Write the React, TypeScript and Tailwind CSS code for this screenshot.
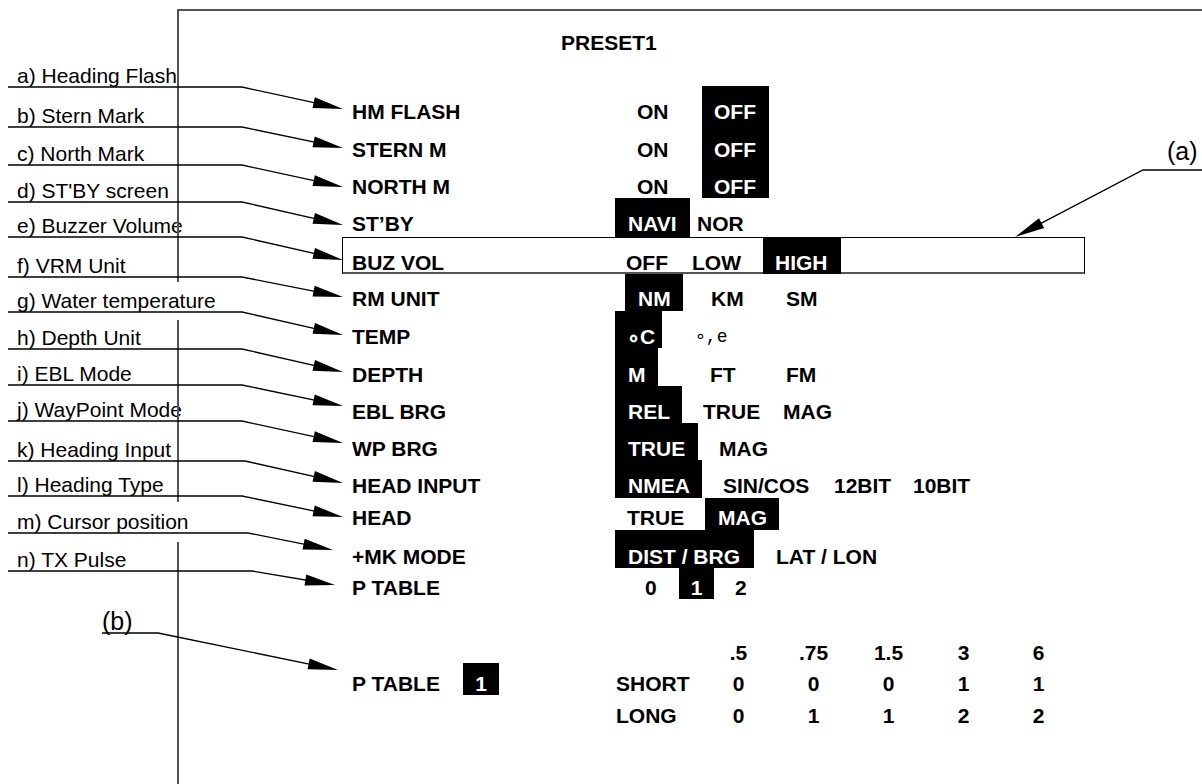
import React from "react";

type Leader = [number, number, number, number];

// [lineY, elbowX, tipX, tipY]
const leaders: Leader[] = [
  [87, 242, 343, 109],
  [127, 242, 343, 148],
  [165, 242, 343, 187],
  [202, 242, 343, 225],
  [237, 242, 343, 260],
  [277, 242, 343, 297],
  [312, 242, 343, 335],
  [349, 242, 343, 372],
  [385, 242, 343, 406],
  [421, 242, 343, 443],
  [461, 245, 343, 483],
  [496, 242, 343, 517],
  [533, 248, 333, 550],
  [571, 252, 335, 585],
];

function arrow(fx: number, fy: number, tx: number, ty: number, len = 30, hw = 5.5) {
  const dx = tx - fx;
  const dy = ty - fy;
  const d = Math.hypot(dx, dy);
  const ux = dx / d;
  const uy = dy / d;
  const bx = tx - ux * len;
  const by = ty - uy * len;
  const px = -uy * hw;
  const py = ux * hw;
  return {
    head: `${tx},${ty} ${bx + px},${by + py} ${bx - px},${by - py}`,
    end: `${tx - ux * 12},${ty - uy * 12}`,
  };
}

function Leaders() {
  const a = arrow(1143, 170, 1015, 237);
  const b = arrow(158, 633, 338, 670);
  return (
    <svg
      className="absolute left-0 top-0 z-10 pointer-events-none"
      width={1202}
      height={784}
      viewBox="0 0 1202 784"
    >
      {leaders.map(([y, ex, tx, ty], i) => {
        const r = arrow(ex, y, tx, ty);
        return (
          <g key={i}>
            <polyline
              points={`8,${y} ${ex},${y} ${r.end}`}
              fill="none"
              stroke="#000"
              strokeWidth={1.3}
            />
            <polygon points={r.head} fill="#000" />
          </g>
        );
      })}
      <polyline points={`102,633 158,633 ${b.end}`} fill="none" stroke="#000" strokeWidth={1.3} />
      <polygon points={b.head} fill="#000" />
      <polyline points={`1202,170 1143,170 ${a.end}`} fill="none" stroke="#000" strokeWidth={1.3} />
      <polygon points={a.head} fill="#000" />
    </svg>
  );
}

const Row = ({
  h,
  pt,
  label,
  children,
}: {
  h: string;
  pt: string;
  label: string;
  children: React.ReactNode;
}) => (
  <div className={`flex ${h}`}>
    <div className={`w-[263px] shrink-0 ${pt}`}>{label}</div>
    {children}
  </div>
);

export default function App() {
  return (
    <div className="relative flex w-[1202px] h-[784px] overflow-hidden bg-white pt-[9px] text-black font-['Liberation_Sans',Arial,sans-serif]">
      {/* left caption column */}
      <div className="w-[177px] shrink-0 text-[21px] leading-[24px] whitespace-nowrap">
        <div className="mt-[55px] h-[40px] pl-[17px]">a) Heading Flash</div>
        <div className="h-[38px] pl-[17px]">b) Stern Mark</div>
        <div className="h-[37px] pl-[17px]">c) North Mark</div>
        <div className="h-[35px] pl-[17px]">d) ST'BY screen</div>
        <div className="h-[40px] pl-[17px]">e) Buzzer Volume</div>
        <div className="h-[35px] pl-[17px]">f) VRM Unit</div>
        <div className="relative z-[1] -mt-[7px] mb-[6px] h-[38px] w-[200px] bg-white pt-[7px] pl-[17px]">
          g) Water temperature
        </div>
        <div className="h-[36px] pl-[17px]">h) Depth Unit</div>
        <div className="h-[36px] pl-[17px]">i) EBL Mode</div>
        <div className="h-[40px] pl-[17px]">j) WayPoint Mode</div>
        <div className="h-[35px] pl-[17px]">k) Heading Input</div>
        <div className="h-[37px] pl-[17px]">l) Heading Type</div>
        <div className="relative z-[1] -mt-[8px] mb-[6px] h-[40px] w-[200px] bg-white pt-[8px] pl-[17px]">
          m) Cursor position
        </div>
        <div className="h-[59px] pl-[17px]">n) TX Pulse</div>
        <div className="pl-[102px] text-[25px] leading-[28px]">(b)</div>
      </div>

      {/* framed preset panel */}
      <div className="flex-1 border-t-2 border-l-2 border-[#555] text-[21px] font-bold leading-[21px] whitespace-nowrap">
        <div className="mt-[21px] pl-[382px]">PRESET1</div>

        <div className="ml-[173px] mt-[33px] flex flex-col">
          <Row h="h-[37px]" pt="pt-[15px]" label="HM FLASH">
            <div className="ml-[22px] w-[65px] pt-[15px]">ON</div>
            <div className="w-[67px] bg-black pl-[12px] pt-[15px] text-white">OFF</div>
          </Row>
          <Row h="h-[38px]" pt="pt-[16px]" label="STERN M">
            <div className="ml-[22px] w-[65px] pt-[16px]">ON</div>
            <div className="w-[67px] bg-black pl-[12px] pt-[16px] text-white">OFF</div>
          </Row>
          <Row h="h-[37px]" pt="pt-[15px]" label="NORTH M">
            <div className="ml-[22px] w-[65px] pt-[15px]">ON</div>
            <div className="w-[67px] bg-black pl-[12px] pt-[15px] text-white">OFF</div>
          </Row>
          <Row h="h-[39px]" pt="pt-[15px]" label="ST’BY">
            <div className="w-[75px] bg-black pl-[13px] pt-[15px] text-white">NAVI</div>
            <div className="ml-[7px] pt-[15px]">NOR</div>
          </Row>

          {/* (a) highlighted row */}
          <div className="-ml-[10px] flex h-[37px] w-[743px] border-t border-l border-r border-black border-b-2 border-b-[#555]">
            <div className="w-[272px] shrink-0 pl-[9px] pt-[14px]">BUZ VOL</div>
            <div className="ml-[11px] w-[66px] pt-[14px]">OFF</div>
            <div className="w-[71px] pt-[14px]">LOW</div>
            <div className="-mt-px -mb-[2px] w-[78px] bg-black pl-[12px] pt-[15px] text-white">HIGH</div>
          </div>

          <Row h="h-[37px]" pt="pt-[14px]" label="RM UNIT">
            <div className="ml-[10px] w-[58px] bg-black pl-[13px] pt-[14px] text-white">NM</div>
            <div className="ml-[28px] w-[75px] pt-[14px]">KM</div>
            <div className="pt-[14px]">SM</div>
          </Row>
          <Row h="h-[37px]" pt="pt-[15px]" label="TEMP">
            <div className="w-[47px] bg-black pl-[12px] pt-[15px] text-white">∘C</div>
            <div className="ml-[33px] pt-[16px] text-[18px] font-normal font-['Liberation_Mono',monospace]">∘,e</div>
          </Row>
          <Row h="h-[38px]" pt="pt-[16px]" label="DEPTH">
            <div className="w-[43px] bg-black pl-[13px] pt-[16px] text-white">M</div>
            <div className="ml-[52px] w-[76px] pt-[16px]">FT</div>
            <div className="pt-[16px]">FM</div>
          </Row>
          <Row h="h-[37px]" pt="pt-[15px]" label="EBL BRG">
            <div className="w-[67px] bg-black pl-[13px] pt-[15px] text-white">REL</div>
            <div className="ml-[21px] w-[80px] pt-[15px]">TRUE</div>
            <div className="pt-[15px]">MAG</div>
          </Row>
          <Row h="h-[37px]" pt="pt-[15px]" label="WP BRG">
            <div className="w-[83px] bg-black pl-[13px] pt-[15px] text-white">TRUE</div>
            <div className="ml-[21px] pt-[15px]">MAG</div>
          </Row>
          <Row h="h-[38px]" pt="pt-[15px]" label="HEAD INPUT">
            <div className="w-[87px] bg-black pl-[13px] pt-[15px] text-white">NMEA</div>
            <div className="ml-[21px] w-[111px] pt-[15px]">SIN/COS</div>
            <div className="w-[79px] pt-[15px]">12BIT</div>
            <div className="pt-[15px]">10BIT</div>
          </Row>
          <Row h="h-[32px]" pt="pt-[9px]" label="HEAD">
            <div className="ml-[12px] w-[78px] pt-[9px]">TRUE</div>
            <div className="w-[74px] bg-black pl-[13px] pt-[9px] text-white">MAG</div>
          </Row>
          <Row h="h-[38px]" pt="pt-[16px]" label="+MK MODE">
            <div className="w-[139px] bg-black pl-[13px] pt-[16px] text-white">DIST / BRG</div>
            <div className="ml-[22px] pt-[16px]">LAT / LON</div>
          </Row>
          <Row h="h-[31px]" pt="pt-[9px]" label="P TABLE">
            <div className="ml-[30px] w-[34px] pt-[9px]">0</div>
            <div className="w-[35px] bg-black pt-[9px] text-center text-white">1</div>
            <div className="ml-[21px] pt-[9px]">2</div>
          </Row>

          {/* pulse table */}
          <div className="mt-[39px] flex h-[30px] leading-[30px]">
            <div className="w-[349px] shrink-0" />
            <div className="w-[75px] text-center">.5</div>
            <div className="w-[75px] text-center">.75</div>
            <div className="w-[75px] text-center">1.5</div>
            <div className="w-[75px] text-center">3</div>
            <div className="w-[75px] text-center">6</div>
          </div>
          <div className="flex h-[32px] leading-[31px]">
            <div className="w-[111px] shrink-0">P TABLE</div>
            <div className="-mt-[5px] h-[32px] w-[36px] bg-black pt-[5px] text-center text-white">1</div>
            <div className="ml-[117px] w-[85px]">SHORT</div>
            <div className="w-[75px] text-center">0</div>
            <div className="w-[75px] text-center">0</div>
            <div className="w-[75px] text-center">0</div>
            <div className="w-[75px] text-center">1</div>
            <div className="w-[75px] text-center">1</div>
          </div>
          <div className="flex h-[31px] leading-[31px]">
            <div className="w-[264px] shrink-0" />
            <div className="w-[85px]">LONG</div>
            <div className="w-[75px] text-center">0</div>
            <div className="w-[75px] text-center">1</div>
            <div className="w-[75px] text-center">1</div>
            <div className="w-[75px] text-center">2</div>
            <div className="w-[75px] text-center">2</div>
          </div>
        </div>
      </div>

      {/* callout label for the highlighted row */}
      <div className="absolute left-[1167px] top-[137px] text-[25px] leading-[28px]">(a)</div>

      <Leaders />
    </div>
  );
}
